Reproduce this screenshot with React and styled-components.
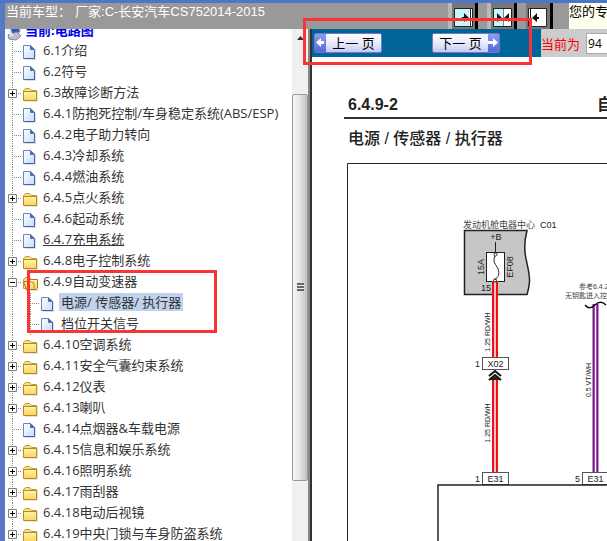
import React, { useState } from "react";
import styled, { createGlobalStyle } from "styled-components";

const chapters = [
  { title: "6.1介绍" },
  { title: "6.2符号" },
  { title: "6.3故障诊断方法", folder: true },
  { title: "6.4.1防抱死控制/车身稳定系统(ABS/ESP)" },
  { title: "6.4.2电子助力转向" },
  { title: "6.4.3冷却系统" },
  { title: "6.4.4燃油系统" },
  { title: "6.4.5点火系统", folder: true },
  { title: "6.4.6起动系统" },
  { title: "6.4.7充电系统", underlined: true },
  { title: "6.4.8电子控制系统", folder: true },
  {
    title: "6.4.9自动变速器",
    folder: true,
    pages: ["电源/ 传感器/ 执行器", "档位开关信号"]
  },
  { title: "6.4.10空调系统", folder: true },
  { title: "6.4.11安全气囊约束系统", folder: true },
  { title: "6.4.12仪表", folder: true },
  { title: "6.4.13喇叭", folder: true },
  { title: "6.4.14点烟器&车载电源" },
  { title: "6.4.15信息和娱乐系统", folder: true },
  { title: "6.4.16照明系统", folder: true },
  { title: "6.4.17雨刮器", folder: true },
  { title: "6.4.18电动后视镜", folder: true },
  { title: "6.4.19中央门锁与车身防盗系统", folder: true }
];

const FileIcon = () => (
  <Icon width="18" height="21" aria-hidden="true">
    <path d="M2 5h7l4 4v10H2z" fill="#b9bdcc" opacity="0.5" />
    <path d="M0.5 4.5h7l4 4v9h-11z" fill="url(#paper)" stroke="#6f86bd" />
    <path d="M7.5 4.5v4h4z" fill="#4d69ab" stroke="#5873b2" />
    <path d="M11.5 9v8.500h-11" fill="none" stroke="#4a62a0" />
  </Icon>
);

const FolderIcon = ({ open }) => (
  <Icon width="18" height="21" aria-hidden="true">
    <path d="M2 8h13v11H2z" fill="#b8b8b8" opacity="0.4" />
    <path
      d="M0.500 16.500v-9l2-2h4l2 2h5v9z"
      fill="#f7e08a"
      stroke="#c39a2c"
    />
    {open ? (
      <path
        d="M3.500 17.500l-3-8h5l2-2h7v9l-1 1z"
        fill="url(#folder)"
        stroke="#a87a18"
      />
    ) : (
      <path d="M0.500 8.500h13v9h-13z" fill="url(#folder)" stroke="#b88b20" />
    )}
    {open && <path d="M6 9l5 2v6" fill="none" stroke="#b88b20" />}
  </Icon>
);

const Branch = ({ empty }) => (
  <Icon width="18" height="21" aria-hidden="true">
    <path d="M7.500 0v21" stroke="#888" strokeDasharray="1 1" />
    {!empty && <path d="M9 10.500h8" stroke="#888" strokeDasharray="1 1" />}
  </Icon>
);

const Expander = ({ open, label, onClick }) => (
  <ExpandButton aria-label={label} aria-expanded={open} onClick={onClick}>
    <Icon width="18" height="21" aria-hidden="true">
      <path d="M7.500 0v21" stroke="#888" strokeDasharray="1 1" />
      <path d="M13 10.500h4" stroke="#888" strokeDasharray="1 1" />
      <path d="M3.500 6.500h8v8h-8z" fill="#fff" stroke="#808080" />
      <path d="M5 10.500h5" stroke="#000" />
      {!open && <path d="M7.500 8v5" stroke="#000" />}
    </Icon>
  </ExpandButton>
);

const Chapter = ({ chapter, selected, onSelect }) => {
  const [open, setOpen] = useState(!!chapter.pages);
  return (
    <li>
      <Row>
        {chapter.folder ? (
          <Expander
            open={open}
            label={chapter.title}
            onClick={() => setOpen(!open)}
          />
        ) : (
          <Branch />
        )}
        {chapter.folder ? <FolderIcon open={open} /> : <FileIcon />}
        <TreeLink href="#" $underlined={chapter.underlined}>
          {chapter.title}
        </TreeLink>
      </Row>
      {open && chapter.pages ? (
        <List>
          {chapter.pages.map(page => (
            <Row as="li" key={page}>
              <Branch empty />
              <Branch />
              <FileIcon />
              <TreeLink
                href="#"
                $selected={page === selected}
                onClick={() => onSelect(page)}
              >
                {page}
              </TreeLink>
            </Row>
          ))}
        </List>
      ) : null}
    </li>
  );
};

const arrows = {
  right: "M8 5v3H3v3h5v3l5-4.500z",
  left: "M3 9.500l5-4.500v3h3v3H8v3z"
};

const PanelIcon = ({ kind }) => (
  <Icon width="19" height="19" aria-hidden="true">
    <path d="M0.500 0.500h18v18h-18z" fill="#fff" stroke="#222" />
    {kind === "wide" && <path d="M1 1h14v17H1z" fill="#c8f4fc" />}
    {kind === "split" && <path d="M1 1h9v17H1z" fill="#c8f4fc" />}
    {kind === "wide" && (
      <path d="M10 5l5 5-5 4v-3H8V9h2z" fill="#111" />
    )}
    {kind === "wide" && <path d="M16.500 1v17" stroke="#222" />}
    {kind === "split" && (
      <path d="M4 5l5 5-5 4zM16 5l-5 5 5 4z" fill="#111" />
    )}
    {kind === "split" && <path d="M10.500 1v17" stroke="#789" />}
    {kind === "narrow" && <path d="M4 10l5-5v4h2v2H9v3z" fill="#111" />}
    {kind === "narrow" && <path d="M2.500 1v17" stroke="#111" />}
  </Icon>
);

const Wire = ({ x, from, to, color }) => (
  <g>
    <path d={`M${x} ${from}V${to}`} stroke={color} strokeWidth="6" />
    <path d={`M${x} ${from}V${to}`} stroke="#fff" strokeWidth="1.500" />
  </g>
);

const Connector = ({ x, y, pin, name }) => (
  <g>
    <rect x={x} y={y} width="26" height="12" fill="#fff" stroke="#555" />
    <text x={x + 13} y={y + 9} fontSize="9" textAnchor="middle">
      {name}
    </text>
    <text x={x - 5} y={y + 9} fontSize="9" textAnchor="middle">
      {pin}
    </text>
  </g>
);

const Vertical = ({ x, y, size, children }) => (
  <text
    transform={`translate(${x} ${y}) rotate(-90)`}
    fontSize={size}
    textAnchor="middle"
  >
    {children}
  </text>
);

const Circuit = () => (
  <Drawing height="420" role="img" aria-label="电源 / 传感器 / 执行器">
    <g transform="translate(-344 -160)" fill="#222">
      <path d="M347.500 600V163.500H1200" fill="none" stroke="#222" />
      <text x="463" y="228" fontSize="9" fill="#444">
        发动机舱电器中心
      </text>
      <text x="540" y="228" fontSize="9">
        C01
      </text>
      <path
        d="M464.500 230.500H527C525 238 524 247 525.500 256C527 265 530 273 529.500 282C529 288 528 291 527 294.500H464.500z"
        fill="#c6c6c6"
        stroke="#222"
        strokeWidth="1.500"
      />
      <text x="496" y="240" fontSize="9" textAnchor="middle">
        +B
      </text>
      <path d="M495.500 242v10" stroke="#222" />
      <rect x="486.500" y="252.500" width="18" height="29" fill="#fff" stroke="#222" />
      <Wire x={495} from={281} to={357} color="#f00f14" />
      <path
        d="M495 256C492 262 496 264 498 269C500 274 498 278 495 279"
        fill="none"
        stroke="#222"
      />
      <circle cx="495.500" cy="254.500" r="1.500" fill="#fff" stroke="#222" />
      <circle cx="495" cy="280.500" r="1.500" fill="#fff" stroke="#222" />
      <Vertical x={484} y={267} size={9}>
        15A
      </Vertical>
      <Vertical x={513} y={267} size={9}>
        EF08
      </Vertical>
      <text x="486" y="291" fontSize="9" textAnchor="middle">
        15
      </text>
      <Vertical x={490} y={332} size={7}>
        1.25 RD/WH
      </Vertical>
      <Wire x={495} from={378} to={472} color="#f00f14" />
      <Connector x={482.5} y={357.5} pin="1" name="X02" />
      <path
        d="M489 376l6-5 6 5M489 380l6-5 6 5"
        fill="none"
        stroke="#111"
        strokeWidth="2"
      />
      <path d="M490 380l5-4 5 4z" />
      <Vertical x={490} y={423} size={7}>
        1.25 RD/WH
      </Vertical>
      <Connector x={482.5} y={472.5} pin="1" name="E31" />
      <text x="579" y="289" fontSize="7" fill="#444">
        参考6.4.2
      </text>
      <text x="565" y="298" fontSize="7" fill="#444">
        无钥匙进入控制
      </text>
      <Wire x={595.5} from={304} to={472} color="#7d1b8d" />
      <path
        d="M585 305C588 309 592 308 595 305C598 302 602 301 606 305"
        fill="none"
        stroke="#111"
        strokeWidth="1.500"
      />
      <Vertical x={591} y={380} size={7}>
        0.5 VT/WH
      </Vertical>
      <Connector x={582.5} y={472.5} pin="5" name="E31" />
      <path
        d="M438 600V485H1200"
        fill="#fff"
        stroke="#222"
        strokeWidth="1.500"
      />
    </g>
  </Drawing>
);

const App = () => {
  const [selected, setSelected] = useState("电源/ 传感器/ 执行器");
  const [page, setPage] = useState("94");

  return (
    <Window>
      <GlobalStyle />
      <Header>
        <Vehicle>
          <span>当前车型：</span>
          <span>厂家:C-长安汽车CS752014-2015</span>
        </Vehicle>
        <Panels>
          <PanelButton aria-label="展开目录">
            <PanelIcon kind="wide" />
          </PanelButton>
          <PanelButton aria-label="左右分栏">
            <PanelIcon kind="split" />
          </PanelButton>
          <PanelButton aria-label="收起目录" $narrow>
            <PanelIcon kind="narrow" />
          </PanelButton>
        </Panels>
        <Notice>您的专</Notice>
      </Header>
      <Body>
        <Sidebar>
          <Tree>
            <Gradients width="0" height="0" aria-hidden="true">
              <defs>
                <linearGradient id="paper" x1="0" y1="0" x2="1" y2="1">
                  <stop offset="0" stopColor="#fff" />
                  <stop offset="1" stopColor="#c3dcf8" />
                </linearGradient>
                <linearGradient id="folder" x1="0" y1="0" x2="0" y2="1">
                  <stop offset="0" stopColor="#fff3a8" />
                  <stop offset="1" stopColor="#fbd35c" />
                </linearGradient>
              </defs>
            </Gradients>
            <Root>
              <Icon width="20" height="21" aria-hidden="true">
                <path d="M5 6l9-2 1 8-8 2z" fill="#3558b8" stroke="#8fa3cf" />
                <path d="M3 15l9-3 4 4-5 4-7-1z" fill="#b9bfd0" stroke="#8088a0" />
                <path d="M4 10l5 5-4 2z" fill="#dfe5f2" />
              </Icon>
              当前:电路图
            </Root>
            <List>
              {chapters.map(chapter => (
                <Chapter
                  key={chapter.title}
                  chapter={chapter}
                  selected={selected}
                  onSelect={setSelected}
                />
              ))}
            </List>
          </Tree>
          <Scrollbar>
            <ScrollUp>
              <svg width="7" height="18" aria-hidden="true">
                <path d="M0 11l3.500-4 3.500 4z" fill="#333" />
              </svg>
            </ScrollUp>
            <Thumb>
              <Grip />
            </Thumb>
            <Track />
          </Scrollbar>
        </Sidebar>
        <Divider />
        <Viewer>
          <Toolbar>
            <Pager>
              <PageButton>
                <Tab>
                  <svg width="11" height="17" aria-hidden="true">
                    <path d={arrows.left} transform="translate(-2 -1)" fill="#fff" />
                  </svg>
                </Tab>
                <span>上一 页</span>
              </PageButton>
              <PageButton>
                <span>下一 页</span>
                <Tab>
                  <svg width="11" height="17" aria-hidden="true">
                    <path d={arrows.right} transform="translate(-3 -1)" fill="#fff" />
                  </svg>
                </Tab>
              </PageButton>
            </Pager>
            <PageField>
              <label htmlFor="page">当前为</label>
              <PageInput
                id="page"
                value={page}
                onChange={e => setPage(e.target.value)}
              />
            </PageField>
          </Toolbar>
          <Sheet>
            <SheetHeader>
              <strong>6.4.9-2</strong>
              <Section>自</Section>
            </SheetHeader>
            <SheetTitle>电源 / 传感器 / 执行器</SheetTitle>
            <Circuit />
          </Sheet>
        </Viewer>
      </Body>
      <PagerMark />
      <TreeMark />
    </Window>
  );
};

export default App;

const GlobalStyle = createGlobalStyle`
  * {
    box-sizing: border-box;
  }

  body {
    margin: 0;
    overflow: hidden;
    font-family: "Liberation Sans", "Noto Sans CJK SC", sans-serif;
    font-size: 13px;
  }

  button {
    font: inherit;
    padding: 0;
    border: none;
    cursor: pointer;
  }
`;

const Window = styled.div`
  position: relative;
  display: flex;
  flex-direction: column;
  height: 100vh;
  border-top: 3px solid #4f74cb;
  overflow: hidden;
`;

const Icon = styled.svg`
  display: block;
  flex: none;
`;

const Gradients = styled.svg`
  display: block;
`;

const Header = styled.header`
  display: flex;
  flex: none;
  height: 26px;
  margin-left: 5px;
  background: #999;
  box-shadow: -5px 0 0 #5878c6;
  overflow: hidden;
`;

const Vehicle = styled.div`
  display: flex;
  flex: 1;
  gap: 4px;
  padding-left: 1px;
  line-height: 17px;
  color: #fff;
  white-space: nowrap;
`;

const Panels = styled.div`
  display: flex;
  gap: 9px;
  margin-right: 16px;
`;

const PanelButton = styled.button`
  display: flex;
  align-items: flex-start;
  width: ${props => (props.$narrow ? 27 : 30)}px;
  height: 32px;
  padding: 5px 0 0 2px;
  background: #777;
  border-left: ${props => (props.$narrow ? 0 : 4)}px solid #b8b8b8;
  border-right: 3px solid #000;
`;

const Notice = styled.div`
  width: 38px;
  background: #fffff0;
  color: #000;
  line-height: 17px;
  white-space: nowrap;
  overflow: hidden;
`;

const Body = styled.div`
  display: flex;
  flex: 1;
  min-height: 0;
`;

const Sidebar = styled.nav`
  display: flex;
  flex: none;
  width: 308px;
  border-left: 5px solid #5878c6;
  background: #fff;
`;

const Tree = styled.div`
  flex: 1;
  overflow: hidden;
  font-family: "Open Sans", "Noto Sans CJK SC", sans-serif;
`;

const Root = styled.div`
  display: flex;
  height: 21px;
  margin-top: -9px;
  line-height: 20px;
  color: #0000f0;
  font-weight: bold;
`;

const List = styled.ul`
  list-style: none;
  margin: 0;
  padding: 0;
`;

const Row = styled.div`
  display: flex;
  align-items: flex-start;
  height: 21px;
`;

const ExpandButton = styled.button`
  flex: none;
  background: none;
`;

const TreeLink = styled.a`
  padding: 0 2px;
  line-height: 18px;
  white-space: nowrap;
  color: #333;
  background: ${props => (props.$selected ? "#c0d2ec" : "none")};
  text-decoration: ${props => (props.$underlined ? "underline" : "none")};
`;

const Scrollbar = styled.div`
  display: flex;
  flex-direction: column;
  width: 16px;
  background: #f0f0f0;
`;

const ScrollUp = styled.div`
  display: flex;
  flex: 65 0 0;
  justify-content: center;
`;

const Thumb = styled.div`
  display: flex;
  flex: 387 0 0;
  align-items: center;
  justify-content: center;
  border: 1px solid #999;
  border-radius: 2px;
  background: linear-gradient(to right, #f8f8f8, #e4e4e8 50%, #bfc0c6);
`;

const Grip = styled.div`
  width: 7px;
  height: 8px;
  background: repeating-linear-gradient(#666 0 2px, #eee 2px 3px);
`;

const Track = styled.div`
  flex: 60 0 0;
`;

const Divider = styled.div`
  flex: none;
  width: 4px;
  border-left: 2px solid #888;
  background: #333;
`;

const Viewer = styled.main`
  flex: 1;
  min-width: 0;
  background: #fff;
  overflow: hidden;
`;

const Toolbar = styled.div`
  display: flex;
  height: 28px;
  background: #ccc;
`;

const Pager = styled.div`
  display: flex;
  align-items: center;
  gap: 50px;
  flex: none;
  width: 229px;
  padding: 0 2px;
  background: #069;
`;

const PageButton = styled.button`
  display: flex;
  align-items: center;
  justify-content: space-between;
  width: 68px;
  height: 20px;
  border: 1px solid #7377c8;
  border-radius: 2px;
  background: linear-gradient(#fff, #e4e6fa 60%, #c4c8f4);
  color: #000;
  white-space: nowrap;
  line-height: 17px;

  span {
    flex: 1;
    text-align: center;
  }
`;

const Tab = styled.i`
  display: flex;
  width: 11px;
  height: 18px;
  background: linear-gradient(#8e9cf0, #5568dc);
`;

const PageField = styled.div`
  display: flex;
  align-items: center;
  gap: 6px;
  flex: 1;
  color: #f00;
  white-space: nowrap;

  label {
    flex: none;
  }
`;

const PageInput = styled.input`
  flex: none;
  width: 60px;
  height: 21px;
  padding: 0 1px;
  border: 1px solid #aaa;
  font-family: "Open Sans", sans-serif;
  font-size: 12px;
`;

const Sheet = styled.article`
  padding-left: 32px;
  color: #222;
`;

const SheetHeader = styled.header`
  display: flex;
  align-items: flex-end;
  justify-content: space-between;
  height: 62px;
  padding: 0 0 2px 4px;
  border-bottom: 2px solid #333;
  font-size: 16px;
  line-height: 20px;
`;

const Section = styled.strong`
  width: 10px;
  white-space: nowrap;
`;

const SheetTitle = styled.h1`
  margin: 0;
  padding: 12px 0 13px 4px;
  font-size: 16px;
  font-weight: 500;
  line-height: 16px;
  white-space: nowrap;
`;

const Drawing = styled.svg`
  display: block;
  width: 100%;
  overflow: hidden;
`;

const Mark = styled.div`
  position: absolute;
  border: 3px solid #fa3434;
  pointer-events: none;
`;

const PagerMark = styled(Mark)`
  top: 15px;
  left: 303px;
  width: 229px;
  height: 47px;
`;

const TreeMark = styled(Mark)`
  top: 267px;
  left: 27px;
  width: 190px;
  height: 63px;
`;
